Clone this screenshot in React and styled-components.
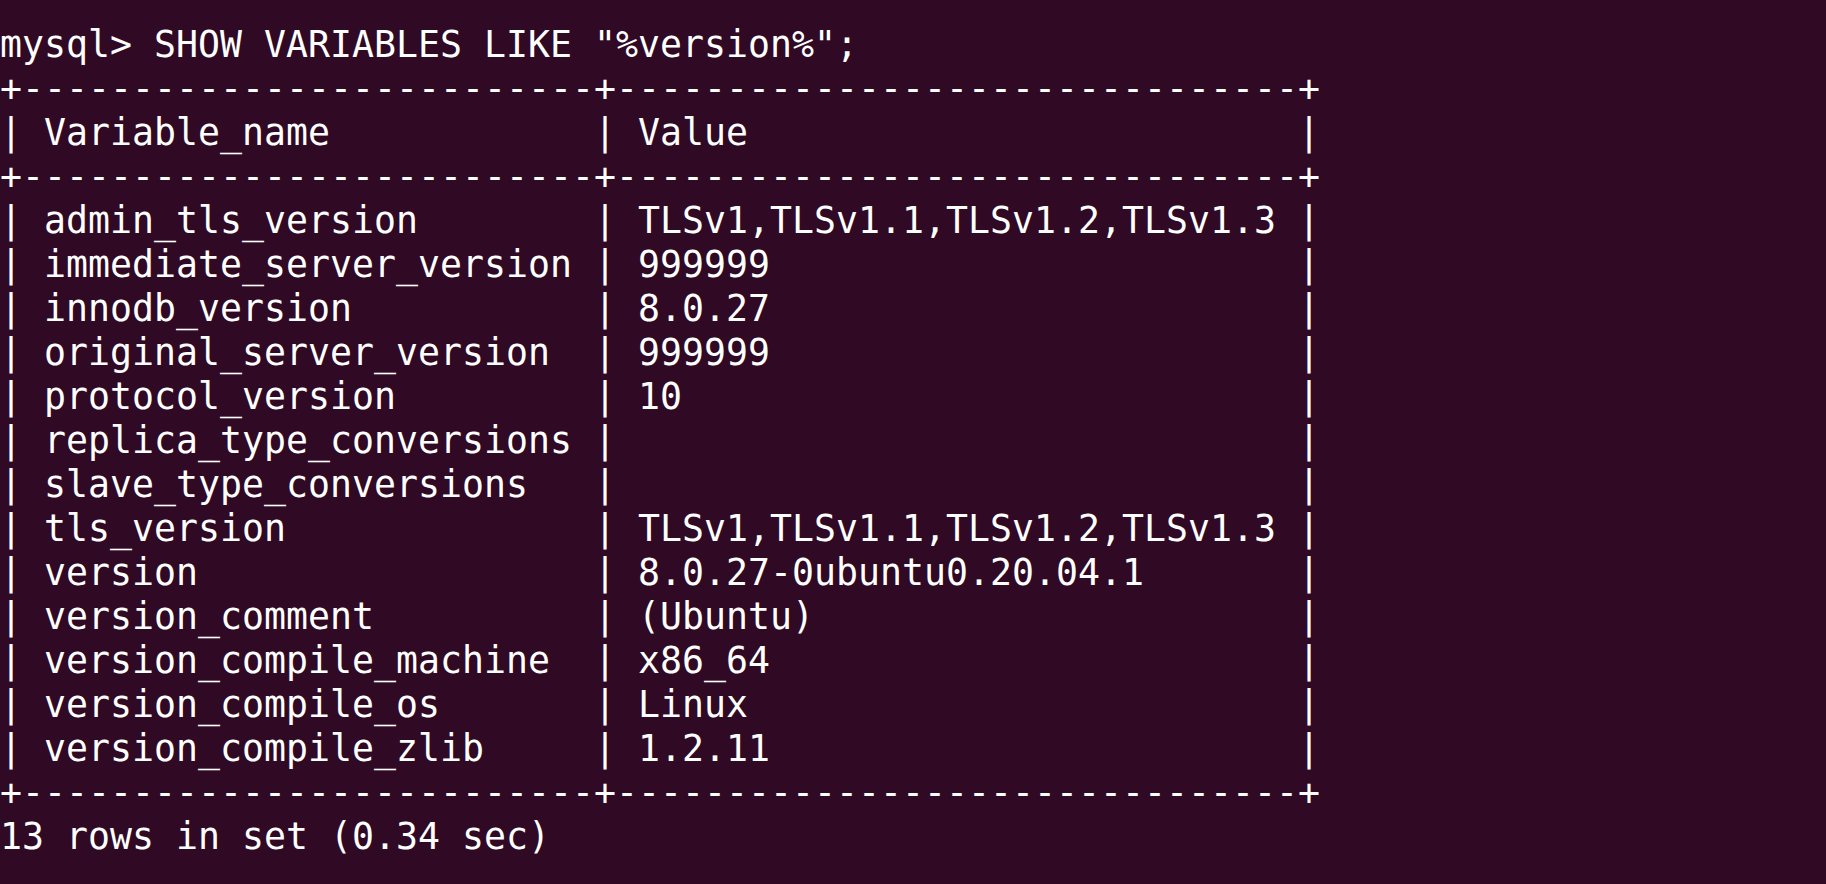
import React from "react";
import styled, { createGlobalStyle } from "styled-components";

const GlobalStyle = createGlobalStyle`
    html, body {
        margin: 0;
        padding: 0;
        background: #300a24;
    }
`

const Terminal = styled.div`
    min-height: 884px;
    box-sizing: border-box;
    padding: 23px 0 0 0;
    background: #300a24;
    color: #ffffff;
    font-family: "DejaVu Sans Mono", monospace;
    font-size: 36.5px;
    letter-spacing: 0.025px;
    line-height: 44px;
`

const Line = styled.div`
    white-space: pre;
    height: 44px;
`

const rows = [
    ["admin_tls_version", "TLSv1,TLSv1.1,TLSv1.2,TLSv1.3"],
    ["immediate_server_version", "999999"],
    ["innodb_version", "8.0.27"],
    ["original_server_version", "999999"],
    ["protocol_version", "10"],
    ["replica_type_conversions", ""],
    ["slave_type_conversions", ""],
    ["tls_version", "TLSv1,TLSv1.1,TLSv1.2,TLSv1.3"],
    ["version", "8.0.27-0ubuntu0.20.04.1"],
    ["version_comment", "(Ubuntu)"],
    ["version_compile_machine", "x86_64"],
    ["version_compile_os", "Linux"],
    ["version_compile_zlib", "1.2.11"],
]

const nameWidth = 24;
const valueWidth = 29;

const border = "+" + "-".repeat(nameWidth + 2) + "+" + "-".repeat(valueWidth + 2) + "+";
const row = (a, b) => "| " + a.padEnd(nameWidth) + " | " + b.padEnd(valueWidth) + " |";

const App = () => {
    const lines = [
        'mysql> SHOW VARIABLES LIKE "%version%";',
        border,
        row("Variable_name", "Value"),
        border,
        ...rows.map(([a, b]) => row(a, b)),
        border,
        "13 rows in set (0.34 sec)",
    ];

    return (
        <>
            <GlobalStyle />
            <Terminal>
                {lines.map((text, i) => (
                    <Line key={i}>{text}</Line>
                ))}
            </Terminal>
        </>
    )
}

export default App;
